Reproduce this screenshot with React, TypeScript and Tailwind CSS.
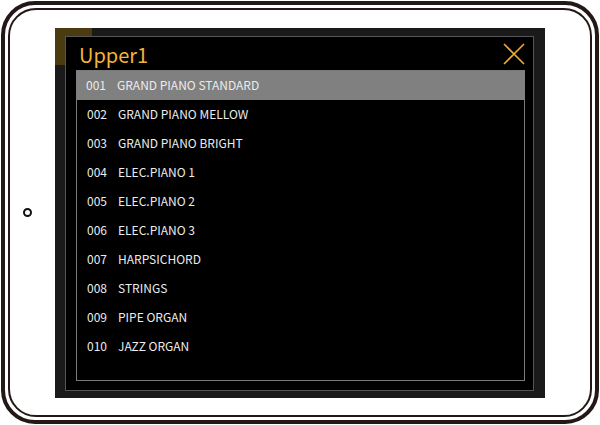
import React from "react";

const tones = [
  "GRAND PIANO STANDARD",
  "GRAND PIANO MELLOW",
  "GRAND PIANO BRIGHT",
  "ELEC.PIANO 1",
  "ELEC.PIANO 2",
  "ELEC.PIANO 3",
  "HARPSICHORD",
  "STRINGS",
  "PIPE ORGAN",
  "JAZZ ORGAN",
];

export default function App() {
  return (
    <div className="w-[600px] h-[425px] bg-white p-px" style={{ fontFamily: '"Noto Sans CJK JP", "Noto Sans", sans-serif' }}>
      {/* tablet body */}
      <div className="h-full w-full rounded-[34px] border-[4px] border-[#231815] p-[3px]">
        <div className="relative h-full w-full rounded-[28px] border-2 border-[#231815] flex items-center justify-center">
          <span className="absolute left-[13px] top-[198px] h-[9px] w-[9px] rounded-full border-[2.5px] border-[#111]" />

          {/* screen */}
          <div className="relative w-[490px] h-[370px] bg-[#1a1a1a] pl-[10px] pr-[11px] pt-[8px] pb-[7px]">
            <div className="absolute left-0 top-0 w-[37px] h-[37px] bg-[#4b3b10]" />
            <div className="relative h-full bg-black border border-[#555] flex flex-col pl-[10px] pr-[8px] pb-[9px]">
              <div className="h-[33px] flex items-center justify-between pl-[3px]">
                <span className="text-[20px] leading-none text-[#f1b43c] pt-[3px]">Upper1</span>
                <svg width="24" height="24" viewBox="0 0 24 24" className="mt-[2px] -mr-[1px]">
                  <path d="M2 2 L22 22 M22 2 L2 22" stroke="#eaa93a" strokeWidth="1.6" fill="none" />
                </svg>
              </div>
              <div className="flex-1 border border-[#7a7a7a] flex flex-col">
                {tones.map((name, i) => (
                  <div
                    key={name}
                    className={`h-[29px] flex items-center pl-[10px] text-[12px] text-[#ececec] ${i === 0 ? "bg-[#808080] -mx-px" : ""}`}
                  >
                    <span className="w-[31px]">{String(i + 1).padStart(3, "0")}</span>
                    <span>{name}</span>
                  </div>
                ))}
              </div>
            </div>
          </div>
        </div>
      </div>
    </div>
  );
}
